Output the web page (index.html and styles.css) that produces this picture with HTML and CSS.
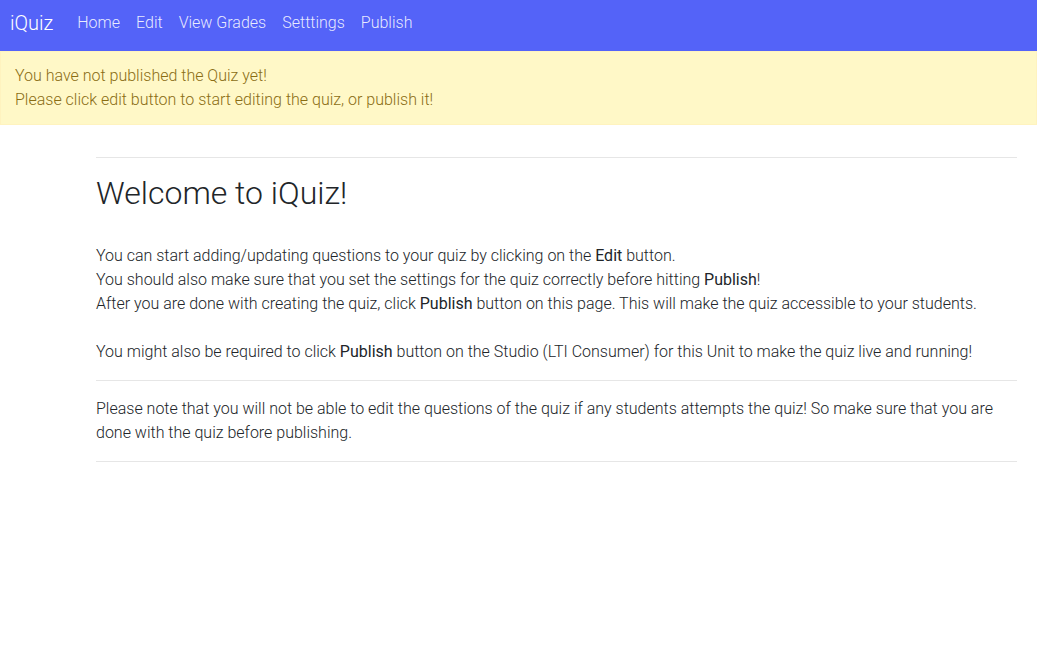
FILE: index.html
```html
<!DOCTYPE html>
<html lang="en">
<head>
<meta charset="utf-8">
<title>iQuiz</title>
<link rel="stylesheet" href="styles.css">
</head>
<body>
<nav class="navbar">
  <a class="brand" href="#">iQuiz</a>
  <ul class="nav-links">
    <li><a href="#">Home</a></li>
    <li><a href="#">Edit</a></li>
    <li><a href="#">View Grades</a></li>
    <li><a href="#">Setttings</a></li>
    <li><a href="#">Publish</a></li>
  </ul>
</nav>
<div class="alert">
  You have not published the Quiz yet!<br>
  Please click edit button to start editing the quiz, or publish it!
</div>
<main class="content">
  <hr class="rule">
  <h2 class="title">Welcome to iQuiz!</h2>
  <p class="text">
    You can start adding/updating questions to your quiz by clicking on the <b>Edit</b> button.<br>
    You should also make sure that you set the settings for the quiz correctly before hitting <b>Publish</b>!<br>
    After you are done with creating the quiz, click <b>Publish</b> button on this page. This will make the quiz accessible to your students.<br>
    <br>
    You might also be required to click <b>Publish</b> button on the Studio (LTI Consumer) for this Unit to make the quiz live and running!
  </p>
  <hr class="rule">
  <p class="text">
    Please note that you will not be able to edit the questions of the quiz if any students attempts the quiz! So make sure that you are done with the quiz before publishing.
  </p>
  <hr class="rule">
</main>
</body>
</html>
```
FILE: styles.css
```css
* { box-sizing: border-box; }
html, body {
  margin: 0;
  padding: 0;
  background: #fff;
}
body {
  font-family: Roboto, "Liberation Sans", sans-serif;
  font-weight: 300;
  font-size: 16px;
  line-height: 24px;
  color: #212529;
}
a { text-decoration: none; }

.navbar {
  height: 51px;
  background: #5463f8;
  display: flex;
  align-items: center;
  padding: 0 10px 6px;
}
.brand {
  color: #fff;
  font-size: 20px;
  line-height: 30px;
  margin-right: 16px;
}
.nav-links {
  list-style: none;
  display: flex;
  margin: 0;
  padding: 0;
}
.nav-links a {
  display: block;
  color: rgba(255, 255, 255, 0.88);
  padding: 0 8px;
  line-height: 24px;
}

.alert {
  background: #fff8c7;
  color: #8a6d14;
  border: 1px solid #fff3bf;
  padding: 12px 14px;
  line-height: 24px;
}

.content {
  margin: 0 20px 0 96px;
  padding-top: 32px;
}
.rule {
  margin: 0;
  border: 0;
  border-top: 1px solid #e6e6e6;
  height: 0;
}
.title {
  font-size: 32px;
  font-weight: 300;
  line-height: 38.4px;
  margin: 16px 0 32px;
}
.text {
  margin: 0;
  padding: 0 0 16px;
}
.rule + .text { padding-top: 16px; }
.text b { font-weight: 400; }
```
